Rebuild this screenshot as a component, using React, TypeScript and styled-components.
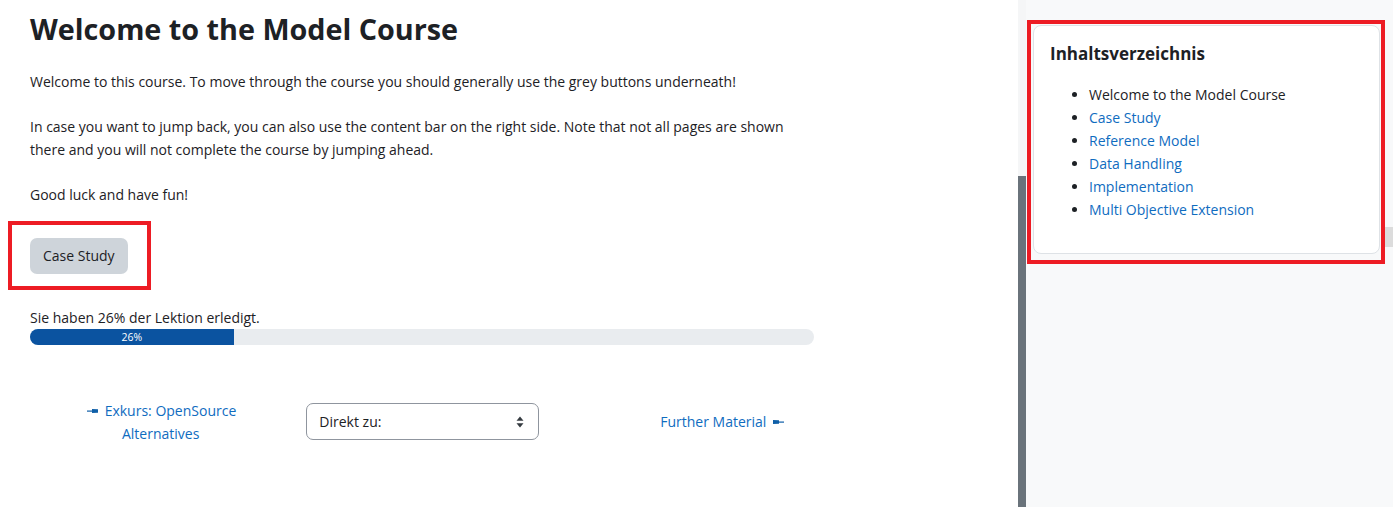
import styled, { createGlobalStyle } from "styled-components";

const GlobalStyle = createGlobalStyle`
  html, body {
    margin: 0;
    padding: 0;
    background: #fff;
  }
  body {
    font-family: "Open Sans", "Noto Sans", sans-serif;
    font-size: 14px;
    color: #1d2125;
  }
`;

const tocItems = [
  { label: "Welcome to the Model Course", current: true },
  { label: "Case Study" },
  { label: "Reference Model" },
  { label: "Data Handling" },
  { label: "Implementation" },
  { label: "Multi Objective Extension" },
];

const Page = styled.div`
  display: flex;
  height: 507px;
  overflow: hidden;
`;

const Main = styled.main`
  width: 1018px;
  flex-shrink: 0;
  padding: 11px 0 0 30px;
  box-sizing: border-box;
`;

const Content = styled.div`
  width: 784px;
`;

const Title = styled.h2`
  margin: 0 0 23px;
  font-size: 28.75px;
  line-height: 36px;
  font-weight: 700;
  color: #1d2125;
`;

const Paragraph = styled.p`
  margin: 0 0 22px;
  line-height: 23px;

  &:last-of-type {
    margin-bottom: 14.5px;
  }
`;

const Highlight = styled.div<{ $pad: string }>`
  display: inline-block;
  border: 4px solid #ed1c24;
  padding: ${({ $pad }) => $pad};
`;

const ButtonArea = styled.div`
  display: flex;
  margin-left: -22px;
`;

const GreyButton = styled.button`
  display: block;
  font-family: inherit;
  font-size: 14px;
  color: #1d2125;
  background: #ced4da;
  border: none;
  border-radius: 7px;
  height: 36px;
  padding: 0 13px;
`;

const ProgressLabel = styled.div`
  margin-top: 16px;
  line-height: 23px;
`;

const Bar = styled.div`
  height: 16px;
  border-radius: 8px;
  background: #e9ecef;
  overflow: hidden;
  display: flex;
`;

const Fill = styled.div`
  background: #0b53a0;
  color: #fff;
  font-size: 10.5px;
  line-height: 16px;
  text-align: center;
`;

const Nav = styled.div`
  display: grid;
  grid-template-columns: repeat(3, 1fr);
  align-items: center;
  margin-top: 54px;
`;

const PrevCell = styled.div`
  padding: 0 32px;
  text-align: center;
`;

const NavLink = styled.a`
  color: #0f6cbf;
  text-decoration: none;
  line-height: 23px;
`;

const SelectCell = styled.div`
  padding: 0 14px 0 15px;
`;

const FakeSelect = styled.div`
  display: flex;
  align-items: center;
  justify-content: space-between;
  height: 37px;
  box-sizing: border-box;
  border: 1px solid #8f959e;
  border-radius: 7px;
  padding: 0 14px 0 12px;
  color: #1d2125;
`;

const NextCell = styled.div`
  display: flex;
  justify-content: flex-end;
  padding-right: 28px;
`;

const ArrowIcon = styled.svg`
  vertical-align: middle;
  margin: 0 2px;
  position: relative;
  top: -1px;
`;

const ScrollTrack = styled.div`
  width: 8px;
  flex-shrink: 0;
  display: flex;
  flex-direction: column;
  background: #f5f6f7;
`;

const ScrollThumb = styled.div`
  margin-top: 176px;
  flex: 1;
  background: #6a737b;
`;

const Drawer = styled.aside`
  flex: 1;
  background: #f8f9fa;
  padding: 20px 0 0 1px;
  display: flex;
  align-items: flex-start;
`;

const Card = styled.div`
  width: 347px;
  box-sizing: border-box;
  background: #fff;
  border: 1px solid #dee2e6;
  border-radius: 8px;
  padding: 14px 16px 32px 16px;
`;

const CardTitle = styled.h5`
  margin: 0 0 16px;
  font-size: 17px;
  line-height: 27px;
  font-weight: 700;
  color: #1d2125;
`;

const TocList = styled.ul`
  margin: 0;
  padding-left: 39px;
`;

const TocItem = styled.li<{ $current?: boolean }>`
  line-height: 23px;
  color: ${({ $current }) => ($current ? "#1d2125" : "#0f6cbf")};
  &::marker {
    color: #1d2125;
  }
`;

const EdgeTab = styled.div`
  width: 8px;
  height: 20px;
  margin-top: 207px;
  background: #dcdcdc;
`;

const LeftArrow = () => (
  <ArrowIcon width="12" height="6" viewBox="0 0 12 6">
    <rect x="0" y="2.5" width="5" height="1.2" fill="#0f5fa8" />
    <path d="M5 1 L11 1.3 L11 4.7 L5 5 Z" fill="#0f5fa8" />
  </ArrowIcon>
);

const RightArrow = () => (
  <ArrowIcon width="12" height="6" viewBox="0 0 12 6">
    <path d="M1 1 L7 1.3 L7 4.7 L1 5 Z" fill="#0f5fa8" />
    <rect x="7" y="2.5" width="5" height="1.2" fill="#0f5fa8" />
  </ArrowIcon>
);

const UpDown = () => (
  <svg width="8" height="12" viewBox="0 0 8 12">
    <path d="M4 0.5 L7.5 4.8 L0.5 4.8 Z" fill="#343a40" />
    <path d="M4 11.5 L7.5 7.2 L0.5 7.2 Z" fill="#343a40" />
  </svg>
);

export default function App() {
  const progress = 26;

  return (
    <>
      <GlobalStyle />
      <Page>
        <Main>
          <Content>
            <Title>Welcome to the Model Course</Title>
            <Paragraph>
              Welcome to this course. To move through the course you should
              generally use the grey buttons underneath!
            </Paragraph>
            <Paragraph>
              In case you want to jump back, you can also use the content bar
              on the right side. Note that not all pages are shown there and
              you will not complete the course by jumping ahead.
            </Paragraph>
            <Paragraph>Good luck and have fun!</Paragraph>

            <ButtonArea>
              <Highlight $pad="13px 19px 12px 18px">
                <GreyButton>Case Study</GreyButton>
              </Highlight>
            </ButtonArea>

            <ProgressLabel>Sie haben {progress}% der Lektion erledigt.</ProgressLabel>
            <Bar>
              <Fill style={{ width: `${progress}%` }}>{progress}%</Fill>
            </Bar>

            <Nav>
              <PrevCell>
                <NavLink href="#">
                  <LeftArrow /> Exkurs: OpenSource Alternatives
                </NavLink>
              </PrevCell>
              <SelectCell>
                <FakeSelect>
                  <span>Direkt zu:</span>
                  <UpDown />
                </FakeSelect>
              </SelectCell>
              <NextCell>
                <NavLink href="#">
                  Further Material <RightArrow />
                </NavLink>
              </NextCell>
            </Nav>
          </Content>
        </Main>

        <ScrollTrack>
          <ScrollThumb />
        </ScrollTrack>

        <Drawer>
          <Highlight $pad="1px 1px 6px 2px">
            <Card>
              <CardTitle>Inhaltsverzeichnis</CardTitle>
              <TocList>
                {tocItems.map((item) => (
                  <TocItem key={item.label} $current={item.current}>
                    {item.label}
                  </TocItem>
                ))}
              </TocList>
            </Card>
          </Highlight>
          <EdgeTab />
        </Drawer>
      </Page>
    </>
  );
}
